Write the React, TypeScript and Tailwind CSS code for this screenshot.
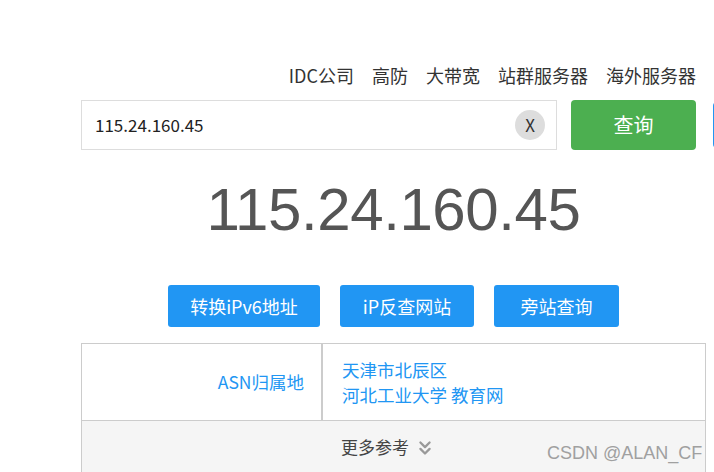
import { ChevronsDown } from 'lucide-react'

const navLinks = ['IDC公司', '高防', '大带宽', '站群服务器', '海外服务器']
const actions = [
  { label: '转换iPv6地址', w: 'w-[152px]' },
  { label: 'iP反查网站', w: 'w-[134px]' },
  { label: '旁站查询', w: 'w-[125px]' },
]

export default function App() {
  return (
    <div
      className="relative h-[472px] w-[714px] overflow-hidden bg-white"
      style={{ fontFamily: '"Noto Sans CJK SC", "Liberation Sans", sans-serif' }}
    >
      <div className="ml-[81px] w-[625px] pt-[61px]">
        {/* Top links */}
        <nav className="flex h-[28px] items-center justify-end gap-[18px] pr-[10px] text-[18px] leading-[28px] text-[#333]">
          {navLinks.map(l => (
            <a key={l} className="whitespace-nowrap">{l}</a>
          ))}
        </nav>

        {/* Search */}
        <div className="mt-[11px] flex items-center">
          <div className="flex h-[50px] w-[476px] shrink-0 items-center border border-[#ddd] pl-[13px] pr-[11px]">
            <span className="flex-1 text-[17px] text-[#222]">115.24.160.45</span>
            <span className="flex h-[30px] w-[30px] items-center justify-center rounded-full bg-[#ddd] text-[17px] text-[#333]">
              X
            </span>
          </div>
          <button className="ml-[14px] h-[50px] w-[125px] shrink-0 rounded-[4px] bg-[#4caf50] text-[20px] text-white">
            查询
          </button>
          <div className="ml-[17px] h-[46px] w-[40px] shrink-0 rounded-[4px] border-2 border-[#2196f3]" />
        </div>

        {/* Big IP */}
        <div
          className="mt-[24px] text-center text-[60px] leading-[72px] tracking-[-0.4px] text-[#555]"
          style={{ fontFamily: '"Liberation Sans", Arial, sans-serif' }}
        >
          115.24.160.45
        </div>

        {/* Actions */}
        <div className="mt-[39px] flex justify-center gap-[20px]">
          {actions.map(a => (
            <button
              key={a.label}
              className={`${a.w} h-[42px] rounded-[3px] bg-[#2196f3] text-[18px] text-white`}
            >
              {a.label}
            </button>
          ))}
        </div>

        {/* Info table */}
        <div className="mt-[16px] border border-[#ccc]">
          <div className="flex h-[76px]">
            <div className="flex w-[241px] items-center justify-end border-r-2 border-[#ccc] pr-[17px] text-[17.5px] text-[#2196f3]">
              ASN归属地
            </div>
            <div className="flex flex-col justify-center pl-[19px] text-[17.5px] leading-[25px] text-[#2196f3]">
              <span>天津市北辰区</span>
              <span>河北工业大学 教育网</span>
            </div>
          </div>
          <div className="flex h-[60px] items-start justify-center border-t border-[#ccc] bg-[#f5f5f5] pt-[13px] pr-[10px] text-[17px] text-[#444]">
            <span className="mr-[5px]">更多参考</span>
            <ChevronsDown className="mt-[3px] h-[22px] w-[22px] text-[#999]" strokeWidth={2.5} />
          </div>
        </div>
      </div>

      <div
        className="absolute left-[547px] top-[440px] text-[18px] text-[#a0a0a0]"
        style={{ fontFamily: '"Liberation Sans", Arial, sans-serif' }}
      >
        CSDN @ALAN_CF
      </div>
    </div>
  )
}
